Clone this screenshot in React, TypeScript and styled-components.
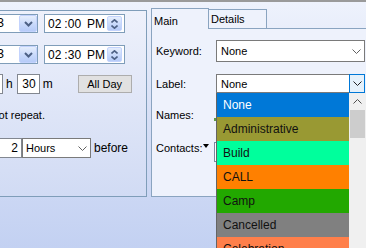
import React from 'react';
import styled, { createGlobalStyle } from 'styled-components';

const GlobalStyle = createGlobalStyle`
  * { box-sizing: border-box; }
  html, body { margin: 0; padding: 0; }
  body {
    font-family: 'Liberation Sans', Arial, sans-serif;
    font-size: 11px;
    color: #000;
    overflow: hidden;
  }
`;

const Window = styled.div`
  width: 366px;
  height: 248px;
  overflow: hidden;
  border-top: 2px solid #9a9a9a;
  background: linear-gradient(to bottom, #eef2fc 0%, #d8e0f6 45%, #c3d1f2 100%);
  display: flex;
  align-items: flex-start;
`;

/* ---------- left panel (recurrence / reminder) ---------- */

const LeftPanel = styled.div`
  flex-shrink: 0;
  margin: 8px 0 0 -100px;
  width: 247px;
  height: 187px;
  border: 1px solid #7f9db9;
  background: linear-gradient(to bottom, #eef1fb 0%, #d1dbf4 100%);
  padding: 3px 0 0 39px;
  display: flex;
  flex-direction: column;
`;

const Row = styled.div<{ $top?: number }>`
  display: flex;
  align-items: center;
  margin-top: ${p => p.$top ?? 0}px;
  white-space: nowrap;
`;

const DateSelect = styled.div`
  width: 98px;
  height: 19px;
  border: 1px solid #7f9db9;
  background: #fff;
  display: flex;
`;

const DateText = styled.span`
  flex: 1;
  text-align: right;
  padding-right: 15px;
  font-size: 12px;
  line-height: 17px;
  overflow: hidden;
`;

const LunaButton = styled.span`
  width: 18px;
  border-radius: 2px;
  border: 1px solid #c3d3fd;
  background: linear-gradient(to bottom, #e6eefc 0%, #c8d9fb 55%, #b6cbf8 100%);
  display: flex;
  align-items: center;
  justify-content: center;
`;

const TimeBox = styled.div`
  margin-left: 6px;
  width: 81px;
  height: 19px;
  border: 1px solid #7f9db9;
  background: #fff;
  display: flex;
  align-items: center;
  padding-left: 3px;
  font-size: 12px;
`;

const TimePart = styled.span<{ $gap?: number }>`
  margin-left: ${p => p.$gap ?? 0}px;
`;

const SpinButton = styled(LunaButton)`
  margin-left: auto;
  margin-right: 2px;
  width: 15px;
  height: 15px;
  flex-direction: column;
  gap: 2px;
`;

const NumBox = styled.div<{ $w: number; $gap?: number }>`
  margin-left: ${p => p.$gap ?? 0}px;
  width: ${p => p.$w}px;
  height: 20px;
  border: 1px solid #828790;
  background: #fff;
  text-align: right;
  padding-right: 3px;
  font-size: 12px;
  line-height: 18px;
`;

const Unit = styled.span<{ $gap?: number }>`
  margin-left: ${p => p.$gap ?? 0}px;
  font-size: 12px;
`;

const PlainButton = styled.div`
  margin-left: 25px;
  width: 54px;
  height: 18px;
  border: 1px solid #adadad;
  background: #e1e1e1;
  display: flex;
  align-items: center;
  justify-content: center;
  font-size: 11px;
`;

const Note = styled.div`
  margin-top: 14px;
  width: 105px;
  text-align: right;
  line-height: 14px;
  font-size: 11px;
  white-space: nowrap;
`;

const PlainSelect = styled.div<{ $w: number; $gap?: number }>`
  margin-left: ${p => p.$gap ?? 0}px;
  width: ${p => p.$w}px;
  height: 20px;
  border: 1px solid #7a7a7a;
  background: #fff;
  display: flex;
  align-items: center;
  padding-left: 3px;
  font-size: 11px;
`;

const ThinChevronBox = styled.span`
  margin-left: auto;
  width: 16px;
  display: flex;
  align-items: center;
  justify-content: center;
`;

/* ---------- right panel (tabs) ---------- */

const TabControl = styled.div`
  flex-shrink: 0;
  margin: 7px 0 0 4px;
  width: 222px;
  display: flex;
  flex-direction: column;
`;

const TabStrip = styled.div`
  height: 19px;
  display: flex;
  align-items: flex-end;
`;

const Tab = styled.div<{ $active?: boolean; $w: number }>`
  position: relative;
  z-index: ${p => (p.$active ? 2 : 0)};
  width: ${p => p.$w}px;
  height: ${p => (p.$active ? 21 : 19)}px;
  margin-bottom: ${p => (p.$active ? -1 : 0)}px;
  margin-left: ${p => (p.$active ? 0 : -1)}px;
  border: 1px solid #8aa4c0;
  border-bottom: none;
  background: #eef2fc;
  padding: ${p => (p.$active ? 6 : 3)}px 0 0 2px;
  font-size: 11px;
  line-height: 13px;
`;

const TabPage = styled.div`
  height: 169px;
  border: 1px solid #8aa4c0;
  background: #eef2fc;
  padding: 11px 0 0 4px;
  display: flex;
  flex-direction: column;
`;

const FormRow = styled.div<{ $top?: number; $h: number }>`
  margin-top: ${p => p.$top ?? 0}px;
  height: ${p => p.$h}px;
  display: flex;
  align-items: center;
`;

const FieldLabel = styled.span<{ $w?: number }>`
  width: ${p => p.$w ?? 60}px;
  flex-shrink: 0;
  font-size: 11px;
  display: flex;
  align-items: flex-start;
`;

const DropTriangle = styled.span`
  margin: 2px 0 0 1px;
  width: 0;
  height: 0;
  border-left: 3px solid transparent;
  border-right: 3px solid transparent;
  border-top: 4px solid #000;
`;

const ComboWrap = styled.div`
  position: relative;
  z-index: 5;
`;

const Combo = styled.div<{ $h: number }>`
  width: 149px;
  height: ${p => p.$h}px;
  border: 1px solid #7a7a7a;
  background: #fff;
  display: flex;
  align-items: stretch;
  font-size: 11px;
`;

const ComboText = styled.span`
  flex: 1;
  padding-left: 4px;
  display: flex;
  align-items: center;
`;

const ComboButton = styled.span<{ $open?: boolean }>`
  width: 16px;
  margin: ${p => (p.$open ? '-1px -1px -1px 0' : '0')};
  border: 1px solid ${p => (p.$open ? '#0078d7' : 'transparent')};
  background: ${p => (p.$open ? '#e5f1fb' : 'transparent')};
  display: flex;
  align-items: center;
  justify-content: center;
`;

const NamesPeek = styled.span`
  width: 3px;
  height: 3px;
  margin: 8px 0 0 -2px;
  background: #5f9a45;
`;

const ContactsBox = styled.div`
  margin: 8px 0 0 -2px;
  width: 150px;
  height: 20px;
  border: 1px solid #7a8aa0;
  background: #fff;
`;

const DropList = styled.div`
  position: absolute;
  top: 100%;
  left: 0;
  width: 150px;
  height: 170px;
  border-left: 1px solid #646464;
  display: flex;
  overflow: hidden;
`;

const Items = styled.div`
  flex: 1;
  display: flex;
  flex-direction: column;
`;

const Item = styled.div<{ $bg: string; $fg?: string }>`
  flex-shrink: 0;
  height: 24px;
  line-height: 24px;
  padding-left: 6px;
  background: ${p => p.$bg};
  color: ${p => p.$fg ?? '#111'};
  font-size: 12px;
`;

const ScrollBar = styled.div`
  width: 17px;
  background: #f0f0f0;
  display: flex;
  flex-direction: column;
  align-items: center;
`;

const ScrollArrow = styled.div`
  height: 17px;
  display: flex;
  align-items: center;
  justify-content: center;
`;

const ScrollThumb = styled.div`
  width: 15px;
  height: 28px;
  background: #cdcdcd;
`;

const BoldChevron = () => (
  <svg width="9" height="6" viewBox="0 0 9 6">
    <polyline points="1,1 4.5,4.5 8,1" fill="none" stroke="#4d6185" strokeWidth="2" />
  </svg>
);

const SmallChevron = ({ up }: { up?: boolean }) => (
  <svg width="7" height="4" viewBox="0 0 7 4">
    <polyline
      points={up ? '0.5,3.5 3.5,0.8 6.5,3.5' : '0.5,0.5 3.5,3.2 6.5,0.5'}
      fill="none"
      stroke="#4d6185"
      strokeWidth="1.6"
    />
  </svg>
);

const ThinChevron = ({ up, color = '#606060' }: { up?: boolean; color?: string }) => (
  <svg width="9" height="5" viewBox="0 0 9 5">
    <polyline
      points={up ? '0.5,4.5 4.5,0.5 8.5,4.5' : '0.5,0.5 4.5,4.5 8.5,0.5'}
      fill="none"
      stroke={color}
      strokeWidth="1"
    />
  </svg>
);

const labels = [
  { name: 'None', bg: '#0078d7', fg: '#fff' },
  { name: 'Administrative', bg: '#999933' },
  { name: 'Build', bg: '#00ff9c' },
  { name: 'CALL', bg: '#ff8000' },
  { name: 'Camp', bg: '#22a800' },
  { name: 'Cancelled', bg: '#808080' },
  { name: 'Celebration', bg: '#ff7f4a' },
  { name: 'Conference', bg: '#8080ff' },
];

const TimeField = ({ h, m }: { h: string; m: string }) => (
  <TimeBox>
    <TimePart>{h}</TimePart>
    <TimePart $gap={3}>:{m}</TimePart>
    <TimePart $gap={6}>PM</TimePart>
    <SpinButton>
      <SmallChevron up />
      <SmallChevron />
    </SpinButton>
  </TimeBox>
);

export default function App() {
  return (
    <>
      <GlobalStyle />
      <Window>
        <LeftPanel>
          <Row>
            <DateSelect>
              <DateText>11/13/2023</DateText>
              <LunaButton><BoldChevron /></LunaButton>
            </DateSelect>
            <TimeField h="02" m="00" />
          </Row>
          <Row $top={12}>
            <DateSelect>
              <DateText>11/13/2023</DateText>
              <LunaButton><BoldChevron /></LunaButton>
            </DateSelect>
            <TimeField h="02" m="30" />
          </Row>
          <Row $top={10}>
            <NumBox $w={23} $gap={40}>0</NumBox>
            <Unit $gap={3}>h</Unit>
            <NumBox $w={23} $gap={4}>30</NumBox>
            <Unit $gap={3}>m</Unit>
            <PlainButton>All Day</PlainButton>
          </Row>
          <Note>Does not repeat.</Note>
          <Row $top={16}>
            <NumBox $w={42} $gap={40}>2</NumBox>
            <PlainSelect $w={69}>
              Hours
              <ThinChevronBox><ThinChevron /></ThinChevronBox>
            </PlainSelect>
            <Unit $gap={3}>before</Unit>
          </Row>
        </LeftPanel>

        <TabControl>
          <TabStrip>
            <Tab $active $w={58}>Main</Tab>
            <Tab $w={59}>Details</Tab>
          </TabStrip>
          <TabPage>
            <FormRow $h={22}>
              <FieldLabel>Keyword:</FieldLabel>
              <Combo $h={22}>
                <ComboText>None</ComboText>
                <ComboButton><ThinChevron /></ComboButton>
              </Combo>
            </FormRow>
            <FormRow $top={12} $h={19}>
              <FieldLabel>Label:</FieldLabel>
              <ComboWrap>
                <Combo $h={19}>
                  <ComboText>None</ComboText>
                  <ComboButton $open><ThinChevron color="#222" /></ComboButton>
                </Combo>
                <DropList>
                  <Items>
                    {labels.map(l => (
                      <Item key={l.name} $bg={l.bg} $fg={l.fg}>{l.name}</Item>
                    ))}
                  </Items>
                  <ScrollBar>
                    <ScrollArrow><ThinChevron up color="#505050" /></ScrollArrow>
                    <ScrollThumb />
                  </ScrollBar>
                </DropList>
              </ComboWrap>
            </FormRow>
            <FormRow $top={11} $h={22}>
              <FieldLabel>Names:</FieldLabel>
              <NamesPeek />
            </FormRow>
            <FormRow $top={11} $h={22}>
              <FieldLabel $w={60}>
                Contacts:<DropTriangle />
              </FieldLabel>
              <ContactsBox />
            </FormRow>
          </TabPage>
        </TabControl>
      </Window>
    </>
  );
}
